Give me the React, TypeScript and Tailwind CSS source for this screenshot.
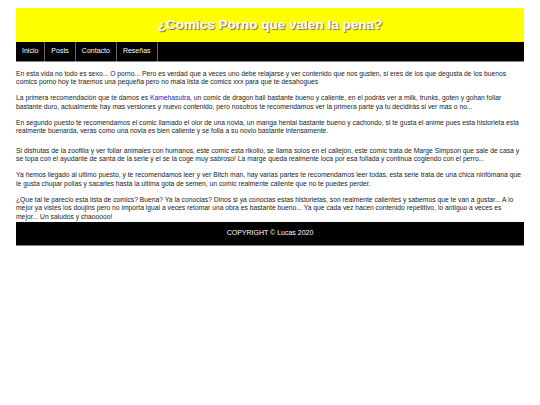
import React from 'react';

const navItems = ['Inicio', 'Posts', 'Contacto', 'Reseñas'];

const App = () => {
  return (
    <div className="min-h-screen bg-white pt-2 font-['Liberation_Sans',Arial,sans-serif]">
      <div className="mx-4">
        {/* Header */}
        <header className="flex h-[34px] items-center justify-center bg-[#ffff00]">
          <h1 className="text-[13.5px] font-bold text-white [text-shadow:1px_1px_1px_#666]">
            ¿Comics Porno que valen la pena?
          </h1>
        </header>

        {/* Nav */}
        <nav className="flex h-[20px] bg-black border-b border-[#888]">
          {navItems.map((item) => (
            <a
              key={item}
              href="#"
              className="flex items-center border-r border-[#666] px-[6px] text-[7px] text-white"
            >
              {item}
            </a>
          ))}
        </nav>

        {/* Content */}
        <main className="text-[6.75px] leading-[8.5px] text-[#222]">
          <p className="my-[7.5px]">
            En esta vida no todo es sexo... O porno... Pero es verdad que a veces uno debe relajarse y ver contenido que nos gusten, si eres de los que degusta de los buenos comics porno hoy te traemos una pequeña pero no mala lista de comics xxx para que te desahogues
          </p>
          <p className="my-[7.5px]">
            La primera recomendación que te damos es <a href="#" className="text-[#2222cc]">Kamehasutra</a>, un comic de dragon ball bastante bueno y caliente, en el podrás ver a milk, trunks, goten y gohan follar bastante duro, actualmente hay mas versiones y nuevo contenido, pero nosotros te recomendamos ver la primera parte ya tu decidirás si ver mas o no...
          </p>
          <p className="mt-[7.5px] mb-[11px]">
            En segundo puesto te recomendamos el comic llamado el olor de una novia, un manga hentai bastante bueno y cachondo, si te gusta el anime pues esta historieta esta realmente buenarda, veras como una novia es bien caliente y se folla a su novio bastante intensamente.
          </p>
          <p className="my-[7.5px]">
            Si disfrutas de la zoofilia y ver follar animales con humanos, este comic esta rikolio, se llama solos en el callejón, este comic trata de Marge Simpson que sale de casa y se topa con el ayudante de santa de la serie y el se la coge muy sabroso! La marge queda realmente loca por esa follada y continua cogiendo con el perro...
          </p>
          <p className="my-[7.5px]">
            Ya hemos llegado al ultimo puesto, y te recomendamos leer y ver Bitch man, hay varias partes te recomendamos leer todas, esta serie trata de una chica ninfómana que le gusta chupar pollas y sacarles hasta la ultima gota de semen, un comic realmente caliente que no te puedes perder.
          </p>
          <p className="mt-[7.5px] mb-[1px]">
            ¿Que tal te parecio esta lista de comics? Buena? Ya la conocias? Dinos si ya conocias estas historietas, son realmente calientes y sabemos que te van a gustar... A lo mejor ya vistes los doujins pero no importa igual a veces retomar una obra es bastante bueno... Ya que cada vez hacen contenido repetitivo, lo antiguo a veces es mejor... Un saludos y chaooooo!
          </p>
        </main>

        {/* Footer */}
        <footer className="flex h-[24px] items-center justify-center bg-black border-b border-[#888] text-[7px] text-white">
          COPYRIGHT © Lucas 2020
        </footer>
      </div>
    </div>
  );
};

export default App;
